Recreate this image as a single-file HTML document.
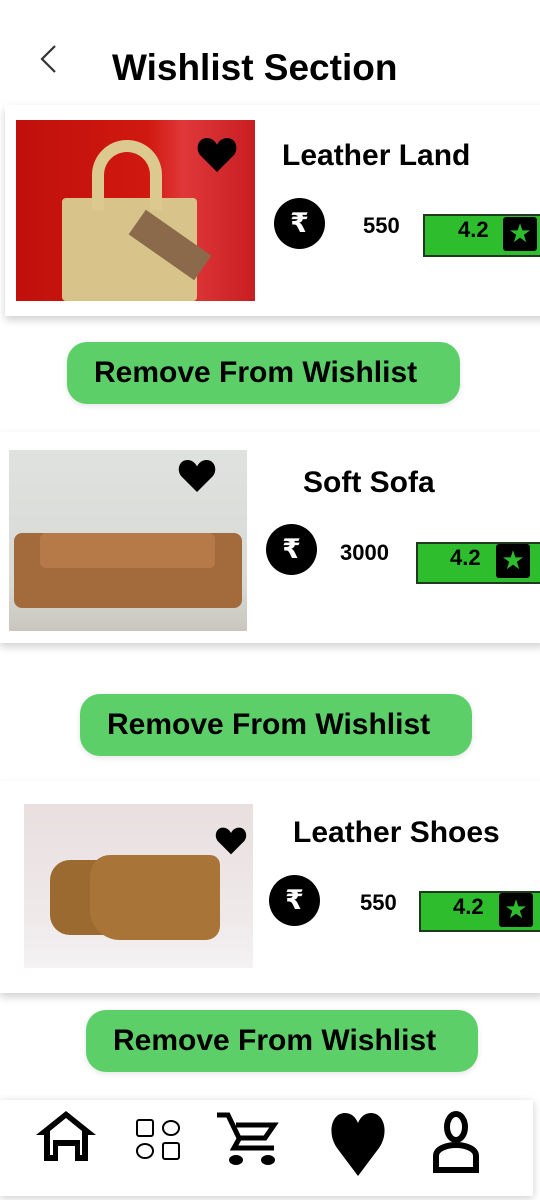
<!DOCTYPE html>
<html><head><meta charset="utf-8"><style>
*{margin:0;padding:0;box-sizing:border-box}
body{width:540px;height:1200px;background:#fff;position:relative;overflow:hidden;font-family:"Liberation Sans",sans-serif;color:#000}
.a{position:absolute}
.card{position:absolute;background:#fff;box-shadow:0 4px 8px rgba(0,0,0,.18)}
.t{position:absolute;font-weight:bold;font-size:30px;white-space:nowrap}
.rs{position:absolute;width:51px;height:51px;border-radius:50%;background:#000;color:#fff;font-size:27px;font-weight:bold;text-align:center;line-height:51px;font-family:"DejaVu Sans",sans-serif}
.pr{position:absolute;font-size:22px;font-weight:bold}
.rt{position:absolute;background:#2dbd2d;border:2px solid #1d3a1d;font-size:22px;font-weight:bold}
.rt span{position:absolute;top:1px}
.st{position:absolute;background:#000;border-radius:3px;width:34px;height:34px;color:#2dbd2d;font-size:26px;text-align:center;line-height:34px;font-family:"DejaVu Sans",sans-serif}
.btn{position:absolute;background:#5ccf68;border-radius:20px;height:62px;font-weight:bold;font-size:30px;line-height:62px;padding-left:27px;box-shadow:0 2px 6px rgba(0,0,0,.1);white-space:nowrap}
.heart{position:absolute}
</style></head><body>
<svg class="a" style="left:38px;top:44px" width="20" height="30" viewBox="0 0 20 30"><path d="M17 2 L4 15 L17 28" stroke="#333" stroke-width="2.2" fill="none"/></svg>
<div class="a" style="left:112px;top:47px;font-size:37px;font-weight:bold;white-space:nowrap">Wishlist Section</div>

<!-- card 1 -->
<div class="card" style="left:5px;top:105px;width:545px;height:211px"></div>
<div class="a" style="left:16px;top:120px;width:239px;height:181px;background:linear-gradient(90deg,#c0100c 0%,#d0180f 55%,#e0383a 70%,#c81e22 100%)"></div>
<div class="a" style="left:62px;top:198px;width:135px;height:103px;background:#d8c48a;border-radius:4px"></div>
<div class="a" style="left:92px;top:140px;width:70px;height:70px;border:12px solid #dcc990;border-bottom:none;border-radius:35px 35px 0 0"></div>
<div class="a" style="left:130px;top:230px;width:80px;height:30px;background:#8a6a4a;transform:rotate(35deg)"></div>
<svg class="heart" style="left:196px;top:138px" width="42" height="34" viewBox="0 0 24 20"><path d="M12 20 L2 10 C-1 6 1 0 6 0 C9 0 11 2 12 4 C13 2 15 0 18 0 C23 0 25 6 22 10 Z"/></svg>
<div class="t" style="left:282px;top:139px">Leather Land</div>
<div class="rs" style="left:274px;top:198px">₹</div>
<div class="pr" style="left:363px;top:213px">550</div>
<div class="rt" style="left:423px;top:214px;width:120px;height:43px"><span style="left:33px">4.2</span></div>
<div class="st" style="left:503px;top:217px">★</div>
<div class="btn" style="left:67px;top:342px;width:393px">Remove From Wishlist</div>

<!-- card 2 -->
<div class="card" style="left:0;top:432px;width:545px;height:211px"></div>
<div class="a" style="left:9px;top:450px;width:238px;height:181px;background:linear-gradient(180deg,#dfe2de 0%,#d6d9d4 75%,#c9c6be 100%)"></div>
<div class="a" style="left:14px;top:533px;width:228px;height:75px;background:#a36a3c;border-radius:8px"></div>
<div class="a" style="left:40px;top:533px;width:175px;height:35px;background:#b57a48;border-radius:6px"></div>
<svg class="heart" style="left:177px;top:460px" width="40" height="32" viewBox="0 0 24 20"><path d="M12 20 L2 10 C-1 6 1 0 6 0 C9 0 11 2 12 4 C13 2 15 0 18 0 C23 0 25 6 22 10 Z"/></svg>
<div class="t" style="left:303px;top:466px">Soft Sofa</div>
<div class="rs" style="left:266px;top:524px">₹</div>
<div class="pr" style="left:340px;top:540px">3000</div>
<div class="rt" style="left:416px;top:542px;width:127px;height:42px"><span style="left:32px">4.2</span></div>
<div class="st" style="left:496px;top:544px">★</div>
<div class="btn" style="left:80px;top:694px;width:392px">Remove From Wishlist</div>

<!-- card 3 -->
<div class="card" style="left:0;top:781px;width:545px;height:212px"></div>
<div class="a" style="left:24px;top:804px;width:229px;height:164px;background:linear-gradient(180deg,#e9dfdf 0%,#efe9ea 70%,#f4f2f3 100%)"></div>
<div class="a" style="left:50px;top:860px;width:80px;height:75px;background:#9a6a30;border-radius:20px 8px 10px 20px"></div>
<div class="a" style="left:90px;top:855px;width:130px;height:85px;background:#a87438;border-radius:20px 10px 14px 30px"></div>
<svg class="heart" style="left:215px;top:826px" width="32" height="30" viewBox="0 0 24 20"><path d="M12 20 L2 10 C-1 6 1 0 6 0 C9 0 11 2 12 4 C13 2 15 0 18 0 C23 0 25 6 22 10 Z"/></svg>
<div class="t" style="left:293px;top:816px">Leather Shoes</div>
<div class="rs" style="left:269px;top:875px">₹</div>
<div class="pr" style="left:360px;top:890px">550</div>
<div class="rt" style="left:419px;top:891px;width:124px;height:41px"><span style="left:32px">4.2</span></div>
<div class="st" style="left:499px;top:893px">★</div>
<div class="btn" style="left:86px;top:1010px;width:392px">Remove From Wishlist</div>

<!-- nav -->
<div class="a" style="left:0;top:1100px;width:533px;height:96px;background:#fff;box-shadow:0 2px 8px rgba(0,0,0,.2)"></div>
<svg class="a" style="left:34px;top:1108px" width="64" height="56" viewBox="0 0 64 56"><path d="M32 3 L62 27 H54 V53 H41 V38 H24 V53 H10 V27 H2 Z" fill="#000"/><path d="M32 10 L48 23 V47 H46 V32 H19 V47 H16 V23 Z" fill="#fff"/></svg>
<svg class="a" style="left:132px;top:1116px" width="50" height="44" viewBox="0 0 50 44"><rect x="5" y="4" width="16" height="16" rx="2" fill="none" stroke="#000" stroke-width="2"/><ellipse cx="39" cy="12" rx="8" ry="7" fill="none" stroke="#000" stroke-width="2"/><ellipse cx="13" cy="35" rx="8" ry="7" fill="none" stroke="#000" stroke-width="2"/><rect x="31" y="27" width="16" height="16" rx="2" fill="none" stroke="#000" stroke-width="2"/></svg>
<svg class="a" style="left:214px;top:1110px" width="70" height="58" viewBox="0 0 70 58"><path d="M3 5 H14 L25 28 H51 L60 15 H22" fill="none" stroke="#000" stroke-width="5"/><path d="M25 29 L20 38 H60" fill="none" stroke="#000" stroke-width="5"/><ellipse cx="22" cy="50" rx="7" ry="5"/><ellipse cx="54" cy="50" rx="7" ry="5"/></svg>
<svg class="a" style="left:323px;top:1110px" width="70" height="66" viewBox="0 0 70 66"><path d="M35 66 L14 38 C4 24 8 3 22 3 C29 3 33 8 35 13 C37 8 41 3 48 3 C62 3 66 24 56 38 Z"/></svg>
<svg class="a" style="left:416px;top:1108px" width="70" height="66" viewBox="0 0 70 66"><ellipse cx="40" cy="19" rx="9" ry="13" fill="none" stroke="#000" stroke-width="6"/><path d="M20 62 V48 C20 40 32 37 40 37 C48 37 60 40 60 48 V62 Z" fill="none" stroke="#000" stroke-width="6"/></svg>
</body></html>
